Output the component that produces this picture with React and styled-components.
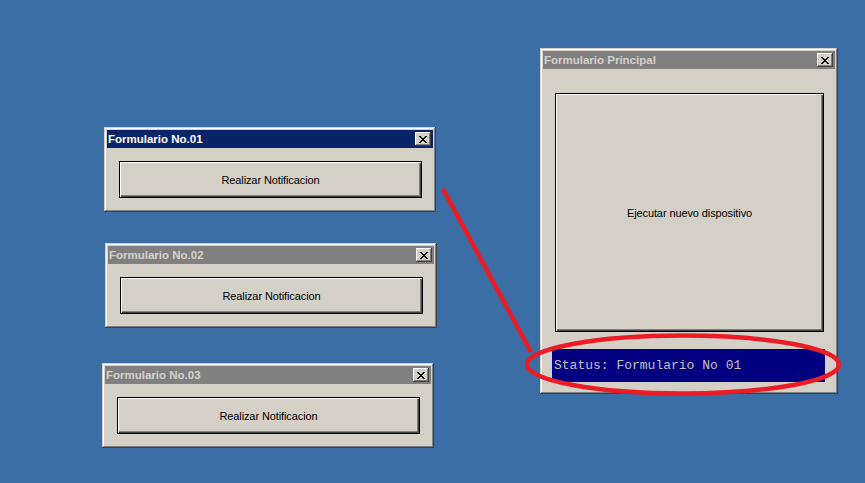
import React from "react";
import styled, { createGlobalStyle } from "styled-components";

const GlobalStyle = createGlobalStyle`
 html, body {
  margin: 0;
  padding: 0;
  background: #3a6ea5;
 }
 body {
  font-family: Tahoma, "Liberation Sans", Arial, sans-serif;
 }
`;

const Desktop = styled.div`
 position: relative;
 width: 865px;
 height: 483px;
 background: #3a6ea5;
 overflow: hidden;
`;

const Window = styled.div`
 position: absolute;
 box-sizing: border-box;
 display: flex;
 flex-direction: column;
 padding: 3px;
 background: #d4d0c8;
 box-shadow: inset -1px -1px #404040, inset 1px 1px #d4d0c8,
  inset -2px -2px #808080, inset 2px 2px #ffffff;
`;

const TitleBar = styled.div`
 display: flex;
 align-items: center;
 justify-content: space-between;
 height: 18px;
 padding: 0 2px 0 1px;
 background: ${(p) => (p.active ? "#0a246a" : "#808080")};
 color: ${(p) => (p.active ? "#ffffff" : "#d4d0c8")};
 font-family: "Liberation Sans", Arial, sans-serif;
 font-weight: bold;
 font-size: 11.5px;
`;

const CloseButton = styled.div`
 box-sizing: border-box;
 display: flex;
 align-items: center;
 justify-content: center;
 width: 16px;
 height: 14px;
 background: #d4d0c8;
 box-shadow: inset -1px -1px #404040, inset 1px 1px #ffffff,
  inset -2px -2px #808080;
`;

const Body = styled.div`
 flex: 1;
 display: flex;
 flex-direction: column;
 padding: ${(p) => p.pad};
`;

const Button = styled.div`
 box-sizing: border-box;
 display: flex;
 align-items: center;
 justify-content: center;
 height: ${(p) => p.h}px;
 border: 1px solid #000000;
 background: #d4d0c8;
 color: #000000;
 font-family: "Liberation Sans", Arial, sans-serif;
 font-size: 11px;
 letter-spacing: -0.1px;
 box-shadow: inset 1px 1px #ffffff, inset -1px -1px #404040,
  inset -2px -2px #808080;
`;

const StatusBar = styled.div`
 display: flex;
 align-items: center;
 height: 33px;
 margin: 17px -1px 0 -3px;
 padding-left: 2px;
 background: #000080;
 color: #c0c0c0;
 font-family: "Liberation Mono", "DejaVu Sans Mono", monospace;
 font-size: 13px;
`;

const Overlay = styled.svg`
 position: absolute;
 left: 0;
 top: 0;
 pointer-events: none;
`;

function CloseIcon() {
 return (
  <svg width="8" height="7" viewBox="0 0 8 7" shapeRendering="crispEdges">
   <path
    d="M0 0h2v1h-2zM6 0h2v1h-2zM1 1h2v1h-2zM5 1h2v1h-2zM2 2h4v1h-4zM3 3h2v1h-2zM2 4h4v1h-4zM1 5h2v1h-2zM5 5h2v1h-2zM0 6h2v1h-2zM6 6h2v1h-2z"
    fill="#000"
   />
  </svg>
 );
}

function SmallForm({ left, top, title, active }) {
 return (
  <Window style={{ left, top, width: 332, height: 85 }}>
   <TitleBar active={active}>
    <span>{title}</span>
    <CloseButton>
     <CloseIcon />
    </CloseButton>
   </TitleBar>
   <Body pad="13px 11px 11px 12px">
    <Button h={37}>Realizar Notificacion</Button>
   </Body>
  </Window>
 );
}

export default function App() {
 return (
  <Desktop>
   <GlobalStyle />
   <SmallForm left={104} top={127} title="Formulario No.01" active />
   <SmallForm left={105} top={243} title="Formulario No.02" />
   <SmallForm left={102} top={363} title="Formulario No.03" />

   <Window style={{ left: 540, top: 48, width: 298, height: 346 }}>
    <TitleBar>
     <span>Formulario Principal</span>
     <CloseButton>
      <CloseIcon />
     </CloseButton>
    </TitleBar>
    <Body pad="24px 11px 9px 12px">
     <Button h={239}>Ejecutar nuevo dispositivo</Button>
     <StatusBar>Status: Formulario No 01</StatusBar>
    </Body>
   </Window>

   <Overlay width="865" height="483">
    <line x1="443" y1="189" x2="531" y2="352" stroke="#ed1c24" strokeWidth="4.5" />
    <ellipse cx="683" cy="364.5" rx="156" ry="29" fill="none" stroke="#ed1c24" strokeWidth="4.5" />
   </Overlay>
  </Desktop>
 );
}
